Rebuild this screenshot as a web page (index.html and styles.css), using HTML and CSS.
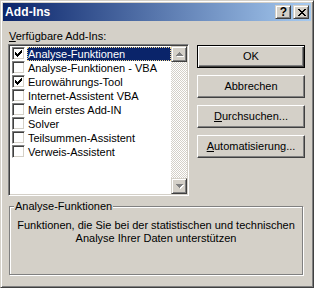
FILE: index.html
```html
<!DOCTYPE html>
<html lang="de">
<head>
<meta charset="utf-8">
<title>Add-Ins</title>
<link rel="stylesheet" href="styles.css">
</head>
<body>
<div class="window">
  <div class="titlebar">
    <span class="title">Add-Ins</span>
    <div class="tbtns">
      <span class="tbtn help">?</span>
      <span class="tbtn close"><svg width="8" height="7" viewBox="0 0 8 7"><path d="M0 0h2v1H0z M6 0h2v1H6z M1 1h2v1H1z M5 1h2v1H5z M2 2h4v1H2z M3 3h2v1H3z M2 4h4v1H2z M1 5h2v1H1z M5 5h2v1H5z M0 6h2v1H0z M6 6h2v1H6z" fill="#000"/></svg></span>
    </div>
  </div>
  <div class="body">
    <div class="top">
      <div class="left">
        <div class="label"><u>V</u>erfügbare Add-Ins:</div>
        <div class="listbox">
          <ul class="items">
            <li class="item"><span class="cb"><svg class="check" width="7" height="7" viewBox="0 0 7 7"><path d="M0 2h1v3H0z M1 3h1v3H1z M2 4h1v3H2z M3 3h1v3H3z M4 2h1v3H4z M5 1h1v3H5z M6 0h1v3H6z" fill="#000"/></svg></span><span class="txt selected">Analyse-Funktionen</span></li>
            <li class="item"><span class="cb"></span><span class="txt">Analyse-Funktionen - VBA</span></li>
            <li class="item"><span class="cb"><svg class="check" width="7" height="7" viewBox="0 0 7 7"><path d="M0 2h1v3H0z M1 3h1v3H1z M2 4h1v3H2z M3 3h1v3H3z M4 2h1v3H4z M5 1h1v3H5z M6 0h1v3H6z" fill="#000"/></svg></span><span class="txt">Eurowährungs-Tool</span></li>
            <li class="item"><span class="cb"></span><span class="txt">Internet-Assistent VBA</span></li>
            <li class="item"><span class="cb"></span><span class="txt">Mein erstes Add-IN</span></li>
            <li class="item"><span class="cb"></span><span class="txt">Solver</span></li>
            <li class="item"><span class="cb"></span><span class="txt">Teilsummen-Assistent</span></li>
            <li class="item"><span class="cb"></span><span class="txt">Verweis-Assistent</span></li>
          </ul>
          <div class="scrollbar">
            <div class="sbbtn"><svg width="8" height="5" viewBox="0 0 8 5"><path transform="translate(1 1)" d="M3 0h1v1h1v1h1v1h1v1H0v-1h1v-1h1v-1h1z" fill="#fff"/><path d="M3 0h1v1h1v1h1v1h1v1H0v-1h1v-1h1v-1h1z" fill="#808080"/></svg></div>
            <div class="sbtrack"></div>
            <div class="sbbtn"><svg width="8" height="5" viewBox="0 0 8 5"><path transform="translate(1 1)" d="M0 0h7v1h-1v1h-1v1h-1v1h-1v-1h-1v-1h-1v-1H0z" fill="#fff"/><path d="M0 0h7v1h-1v1h-1v1h-1v1h-1v-1h-1v-1h-1v-1H0z" fill="#808080"/></svg></div>
          </div>
        </div>
      </div>
      <div class="buttons">
        <div class="btn default">OK</div>
        <div class="btn">Abbrechen</div>
        <div class="btn"><span><u>D</u>urchsuchen...</span></div>
        <div class="btn"><span><u>A</u>utomatisierung...</span></div>
      </div>
    </div>
    <div class="group">
      <span class="legend">Analyse-Funktionen</span>
      <p class="desc">Funktionen, die Sie bei der statistischen und technischen<br>Analyse Ihrer Daten unterstützen</p>
    </div>
  </div>
</div>
</body>
</html>
```
FILE: styles.css
```css
* { box-sizing: border-box; margin: 0; padding: 0; }
html, body { width: 314px; height: 288px; overflow: hidden; background: #D4D0C8; }
body { font-family: "Liberation Sans", Arial, sans-serif; font-size: 11px; color: #000; }

.window {
  width: 314px; height: 288px;
  background: #D4D0C8;
  border: 1px solid; border-color: #D4D0C8 #404040 #404040 #D4D0C8;
  box-shadow: inset 1px 1px 0 #fff, inset -1px -1px 0 #808080;
  padding: 2px;
  display: flex; flex-direction: column;
}

.titlebar {
  height: 18px; flex: none;
  display: flex; align-items: center; justify-content: space-between;
  background: linear-gradient(to right, #0A246A, #A6CAF0);
  padding: 0 2px;
}
.title { color: #fff; font-weight: bold; font-size: 12px; line-height: 18px; letter-spacing: 0.1px; }
.tbtns { display: flex; gap: 2px; }
.tbtn {
  width: 16px; height: 14px;
  background: #D4D0C8;
  border: 1px solid; border-color: #D4D0C8 #404040 #404040 #D4D0C8;
  box-shadow: inset 1px 1px 0 #fff, inset -1px -1px 0 #808080;
  display: flex; align-items: center; justify-content: center;
}
.help { font-weight: bold; font-size: 12px; line-height: 12px; padding-left: 1px; }
.close svg { display: block; margin-left: 1px; }

.body { padding: 9px 6px 0 5px; }
.top { display: flex; gap: 8px; }
.left { width: 181px; }
.label { padding-left: 1px; line-height: 13px; margin-bottom: 1px; }
u { text-decoration: underline; text-underline-offset: 1px; }

.listbox {
  height: 152px; background: #fff;
  border: 1px solid; border-color: #808080 #fff #fff #808080;
  box-shadow: inset 1px 1px 0 #404040, inset -1px -1px 0 #D4D0C8;
  padding: 1px;
  display: flex;
}
.items { list-style: none; flex: 1; padding: 1px 0 0 2px; }
.item { display: flex; height: 14px; align-items: flex-start; }
.cb {
  width: 13px; height: 13px; flex: none; margin-right: 2px;
  background: #fff;
  border: 1px solid; border-color: #808080 #fff #fff #808080;
  box-shadow: inset 1px 1px 0 #404040, inset -1px -1px 0 #D4D0C8;
  padding: 2px;
}
.check { display: block; }
.txt { flex: 1; line-height: 14px; padding-left: 1px; white-space: nowrap; }
.txt.selected {
  background: #0A246A; color: #fff;
  border: 1px dotted #F5DB95; padding-left: 0; line-height: 12px;
}

.scrollbar { width: 16px; display: flex; flex-direction: column; }
.sbbtn {
  height: 16px; flex: none; background: #D4D0C8;
  border: 1px solid; border-color: #D4D0C8 #404040 #404040 #D4D0C8;
  box-shadow: inset 1px 1px 0 #fff, inset -1px -1px 0 #808080;
  display: flex; align-items: center; justify-content: center;
}
.sbbtn svg { display: block; margin-left: 1px; }
.sbtrack {
  flex: 1;
  background: repeating-conic-gradient(#D4D0C8 0 25%, #fff 0 50%) 0 0 / 2px 2px;
}

.buttons { width: 108px; margin-top: 15px; display: flex; flex-direction: column; gap: 7px; }
.btn {
  height: 23px; background: #D4D0C8;
  border: 1px solid; border-color: #fff #404040 #404040 #fff;
  box-shadow: inset -1px -1px 0 #808080;
  display: flex; align-items: center; justify-content: center;
  line-height: 13px;
}
.btn.default {
  border-color: #000;
  box-shadow: inset 1px 1px 0 #fff, inset -1px -1px 0 #404040, inset -2px -2px 0 #808080;
}

.group {
  position: relative;
  margin: 10px 2px 0 1px; height: 69px;
  border: 1px solid #808080;
  box-shadow: inset 1px 1px 0 #fff, 1px 1px 0 #fff;
  padding-top: 12px;
}
.legend {
  position: absolute; top: -7px; left: 4px;
  background: #D4D0C8; padding: 0 1px; line-height: 13px;
}
.desc { text-align: center; line-height: 13px; }
```
